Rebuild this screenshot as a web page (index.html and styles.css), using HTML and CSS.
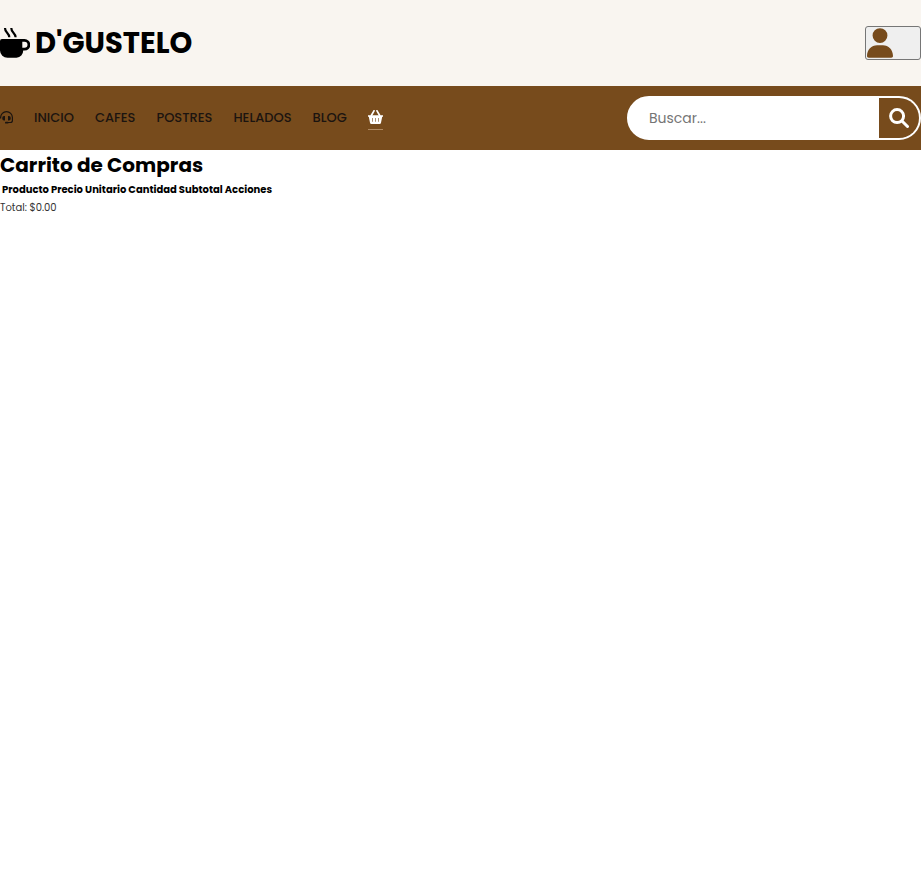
FILE: index.html
```html
<!DOCTYPE html>
<html lang="es">
<head>
<meta charset="utf-8">
<meta name="viewport" content="width=device-width, initial-scale=1">
<title>D'GUSTELO</title>
<link rel="stylesheet" href="styles.css">
</head>
<body>
<header class="header">
  <div class="brand">
    <svg class="brand-icon" viewBox="0 0 30 30" aria-hidden="true">
      <path d="M0 13a2 2 0 0 1 2-2h22.500a5.800 5.800 0 0 1 0 11.600h-1.300A7 7 0 0 1 16.500 29.800H7.500A7.500 7.500 0 0 1 0 22.500zM22.300 13.800v6h2.200a3 3 0 0 0 0-6z" fill-rule="evenodd"/>
      <path d="M5 0c0 5 4 4.500 4.300 9.300M11.300 0c0 5 4 4.500 4.300 9.300" fill="none" stroke="currentColor" stroke-width="2.200"/>
    </svg>
    <h1 class="brand-name"><a href="#">D'GUSTELO</a></h1>
  </div>
  <button class="user-button" type="button" aria-label="Usuario">
    <svg class="user-icon" viewBox="0 0 448 512" aria-hidden="true"><path d="M224 256a128 128 0 1 0 0-256 128 128 0 1 0 0 256zM174 296C78 296 0 374 0 482c0 17 13 30 30 30h388c17 0 30-13 30-30 0-108-78-186-174-186z"/></svg>
  </button>
</header>
<nav class="navbar">
  <ul class="menu">
    <li><a href="#" aria-label="Soporte"><svg class="support-icon" viewBox="0 0 13 14" aria-hidden="true"><path d="M.6 7.500V6.500a5.900 5.900 0 0 1 11.800 0v3a2 2 0 0 1-2 2H8" fill="none" stroke="currentColor" stroke-width="1.200"/><path d="M5 5v4.500H4A1.700 1.700 0 0 1 2.300 7.800V6.700A1.700 1.700 0 0 1 4 5zM8 5v4.500h1a1.700 1.700 0 0 0 1.700-1.700V6.700A1.700 1.700 0 0 0 9 5z"/><rect x="5" y="10.700" width="3.500" height="1.900" rx=".9"/></svg></a></li>
    <li><a href="#">INICIO</a></li>
    <li><a href="#">CAFES</a></li>
    <li><a href="#">POSTRES</a></li>
    <li><a href="#">HELADOS</a></li>
    <li><a href="#">BLOG</a></li>
    <li><a class="basket" href="#" aria-label="Carrito"><svg class="basket-icon" viewBox="0 0 15 14" aria-hidden="true"><path d="M0 5.200h15v1.600h-.8L13 12.800a1.500 1.500 0 0 1-1.500 1.200h-8A1.500 1.500 0 0 1 2 12.800L.8 6.800H0zM4.300 8v3.800h.6V8zM7.200 8v3.800h.6V8zM10.100 8v3.800h.6V8z" fill-rule="evenodd"/><path d="M6 .8 3.300 5.500M9 .8l2.700 4.700" fill="none" stroke="currentColor" stroke-width="1.700" stroke-linecap="round"/></svg></a></li>
  </ul>
  <form class="search">
    <input class="search-input" type="search" placeholder="Buscar..." aria-label="Buscar">
    <button class="search-button" type="submit" aria-label="Buscar"><svg class="search-icon" viewBox="0 0 20 20" aria-hidden="true"><circle cx="8.100" cy="8.100" r="6.500"/><path d="m13 13 5.500 5.500"/></svg></button>
  </form>
</nav>
<main>
  <h2 class="title">Carrito de Compras</h2>
  <table class="cart">
    <thead><tr><th>Producto</th><th>Precio Unitario</th><th>Cantidad</th><th>Subtotal</th><th>Acciones</th></tr></thead>
    <tbody></tbody>
  </table>
  <p class="total">Total: $0.00</p>
</main>
</body>
</html>
```
FILE: styles.css
```css
* {
  margin: 0;
  padding: 0;
  box-sizing: border-box;
}

body {
  background: #fff;
  color: #000;
  font-family: Poppins, Inter, sans-serif;
  font-size: 10px;
}

a {
  color: inherit;
  text-decoration: none;
}

svg {
  display: block;
  fill: currentColor;
}

.header {
  display: flex;
  align-items: center;
  justify-content: space-between;
  padding: 26px 0;
  background: #f9f5f0;
}

.brand {
  display: flex;
  align-items: center;
  gap: 5px;
}

.brand-icon {
  width: 30px;
  height: 30px;
}

.brand-name {
  font-size: 29px;
  font-weight: 700;
  line-height: 34px;
}

.user-button {
  width: 56px;
  height: 34px;
  padding: 0 1px;
  border: 1px solid #767676;
  border-radius: 3px;
  background: #efefef;
  color: #774b1c;
}

.user-icon {
  width: 26px;
  height: 30px;
}

.navbar {
  display: flex;
  align-items: center;
  justify-content: space-between;
  padding: 10px 0;
  background: #774b1c;
}

.menu {
  display: flex;
  align-items: center;
  gap: 21px;
  list-style: none;
  color: #1b1410;
  font-size: 13px;
  font-weight: 500;
  line-height: 20px;
}

.support-icon {
  width: 13px;
  height: 14px;
}

.basket {
  display: block;
  padding: 4px 0 5px;
  border-bottom: 1px solid #b08a63;
  color: #fff;
}

.basket-icon {
  width: 15px;
  height: 14px;
}

.search {
  display: flex;
  width: 294px;
  height: 44px;
  overflow: hidden;
  border: 2px solid #fff;
  border-radius: 22px;
  background: #fff;
}

.search-input {
  flex: 1;
  min-width: 0;
  padding: 0 20px;
  border: 0;
  outline: 0;
  background: #fff;
  font-family: inherit;
  font-size: 14px;
}

.search-input::placeholder {
  color: #757575;
}

.search-button {
  display: flex;
  align-items: center;
  justify-content: center;
  width: 40px;
  border: 0;
  background: #774b1c;
  color: #fff;
}

.search-icon {
  width: 20px;
  height: 20px;
  fill: none;
  stroke: currentColor;
  stroke-width: 3;
  stroke-linecap: round;
}

.title {
  font-size: 20px;
  font-weight: 700;
  line-height: 30px;
}

.cart {
  border-spacing: 2px;
}

.cart th {
  font-size: 10px;
  font-weight: 700;
  line-height: 15px;
}

.total {
  color: #333;
  font-weight: 400;
  line-height: 18px;
}
```
